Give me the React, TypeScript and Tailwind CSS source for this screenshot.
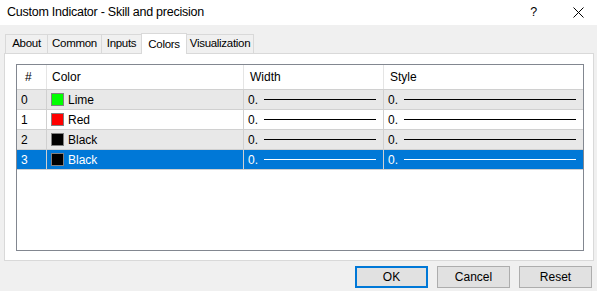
import React from 'react';

const font = "font-['Segoe_UI','Liberation_Sans',Arial,sans-serif]";

const rows = [
  { n: '0', name: 'Lime', swatch: 'bg-[#00ff00]', bg: 'bg-[#e8e8e8]' },
  { n: '1', name: 'Red', swatch: 'bg-[#ff0000]', bg: 'bg-white' },
  { n: '2', name: 'Black', swatch: 'bg-black', bg: 'bg-[#e8e8e8]' },
  { n: '3', name: 'Black', swatch: 'bg-black', bg: 'bg-[#0078d7]', selected: true },
];

function Tab({ label, w, active }: { label: string; w: string; active?: boolean }) {
  if (active) {
    return (
      <div className={`relative z-10 -mb-px -ml-px flex h-[21px] ${w} justify-center border border-b-0 border-[#d9d9d9] bg-white pt-[2px]`}>
        {label}
      </div>
    );
  }
  return (
    <div className={`-ml-px flex h-[19px] ${w} items-center justify-center border border-b-0 border-[#d9d9d9] bg-[#f0f0f0] first:ml-0`}>
      {label}
    </div>
  );
}

function LineCell({ selected, lineW }: { selected?: boolean; lineW: string }) {
  return (
    <div className="flex items-center gap-[6px] pl-[4px]">
      <span>0.</span>
      <div className={`h-[1px] ${lineW} ${selected ? 'bg-white' : 'bg-black'}`} />
    </div>
  );
}

export default function App() {
  return (
    <div className={`flex h-[291px] w-[597px] flex-col overflow-hidden bg-[#f0f0f0] text-[12px] text-black ${font}`}>
      <div className="flex h-[25px] items-center justify-between bg-white pl-[7px] pr-[13px] text-[12.5px] tracking-[-0.25px]">
        <span>Custom Indicator - Skill and precision</span>
        <div className="flex items-center gap-[36px]">
          <span>?</span>
          <svg width="11" height="11" viewBox="0 0 11 11">
            <path d="M0.5 0.5 L10.5 10.5 M10.5 0.5 L0.5 10.5" stroke="#000" strokeWidth="1" />
          </svg>
        </div>
      </div>

      <div className="flex items-end pl-[5px] pt-[8px] text-[11.5px] tracking-[-0.3px]">
        <Tab label="About" w="w-[43px]" />
        <Tab label="Common" w="w-[55px]" />
        <Tab label="Inputs" w="w-[41px]" />
        <Tab label="Colors" w="w-[46px]" active />
        <Tab label="Visualization" w="w-[68px]" />
      </div>

      <div className="mx-[4px] mr-[3px] flex h-[208px] flex-col border border-[#d9d9d9] bg-white pl-[11px] pr-[9px] pt-[10px]">
        <div className="flex h-[187px] flex-col border border-[#828790] bg-white">
          <div className="grid h-[25px] grid-cols-[30px_197px_140px_1fr] border-b border-[#d0d0d0]">
            <div className="flex items-center border-r border-[#e5e5e5] pl-[8px]">#</div>
            <div className="flex items-center border-r border-[#e5e5e5] pl-[5px]">Color</div>
            <div className="flex items-center border-r border-[#e5e5e5] pl-[6px]">Width</div>
            <div className="flex items-center pl-[6px]">Style</div>
          </div>
          {rows.map((r) => (
            <div
              key={r.n}
              className={`grid h-[20px] grid-cols-[30px_197px_140px_1fr] border-b border-[#d0d0d0] ${r.bg} ${r.selected ? 'text-white' : ''}`}
            >
              <div className="flex items-center border-r border-[#d0d0d0] pl-[4px]">{r.n}</div>
              <div className="flex items-center gap-[4px] border-r border-[#d0d0d0] pl-[4px]">
                <div className={`h-[13px] w-[13px] border border-[#808080] ${r.swatch}`} />
                <span>{r.name}</span>
              </div>
              <div className="flex items-center border-r border-[#d0d0d0]">
                <LineCell selected={r.selected} lineW="w-[112px]" />
              </div>
              <div className="flex items-center">
                <LineCell selected={r.selected} lineW="w-[172px]" />
              </div>
            </div>
          ))}
        </div>
      </div>

      <div className="flex justify-end gap-[9px] pr-[5px] pt-[5px]">
        <button className="flex h-[22px] w-[73px] items-center justify-center border-2 border-[#0078d7] bg-[#e1e1e1]">
          OK
        </button>
        <button className="flex h-[22px] w-[73px] items-center justify-center border border-[#adadad] bg-[#e1e1e1]">
          Cancel
        </button>
        <button className="flex h-[22px] w-[73px] items-center justify-center border border-[#adadad] bg-[#e1e1e1]">
          Reset
        </button>
      </div>
    </div>
  );
}
